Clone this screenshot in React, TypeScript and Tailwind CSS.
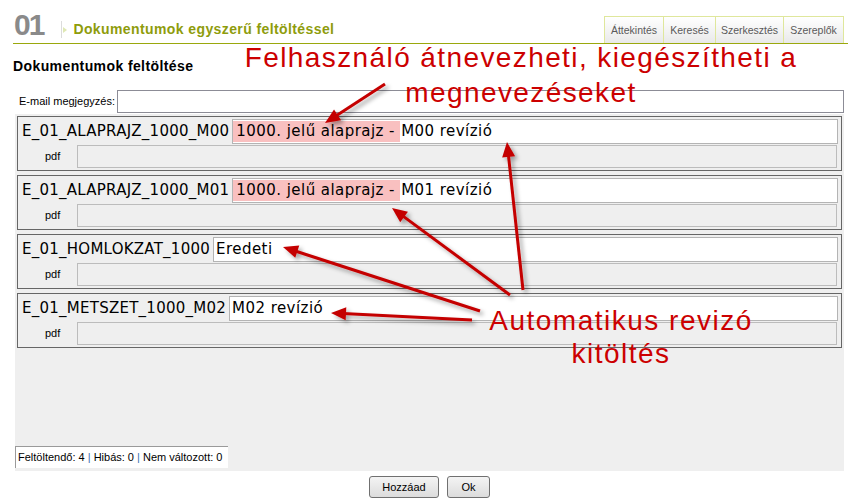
import React from "react"

interface Item {
  name: string
  prefix?: string
  value: string
}

const items: Item[] = [
  { name: "E_01_ALAPRAJZ_1000_M00", prefix: "1000. jelű alaprajz - ", value: "M00 revízió" },
  { name: "E_01_ALAPRAJZ_1000_M01", prefix: "1000. jelű alaprajz - ", value: "M01 revízió" },
  { name: "E_01_HOMLOKZAT_1000", value: "Eredeti" },
  { name: "E_01_METSZET_1000_M02", value: "M02 revízió" },
]

const tabs = [
  { label: "Áttekintés", w: "w-[60px]" },
  { label: "Keresés", w: "w-[53px]" },
  { label: "Szerkesztés", w: "w-[69px]" },
  { label: "Szereplők", w: "w-[61px]" },
]

// annotation arrows: tail -> tip
const arrows = [
  [385, 84, 325, 123],
  [523, 290, 507, 142],
  [510, 295, 392, 208],
  [480, 311, 283, 247],
  [472, 320, 331, 313],
]

function Arrow({ x1, y1, x2, y2 }: { x1: number; y1: number; x2: number; y2: number }) {
  const dx = x2 - x1
  const dy = y2 - y1
  const len = Math.hypot(dx, dy)
  const ux = dx / len
  const uy = dy / len
  const head = 15
  const half = 6.5
  const bx = x2 - ux * head
  const by = y2 - uy * head
  const px = -uy * half
  const py = ux * half
  return (
    <g>
      <line x1={x1} y1={y1} x2={bx + ux * 3} y2={by + uy * 3} stroke="#c40000" strokeWidth={3} />
      <polygon points={`${x2},${y2} ${bx + px},${by + py} ${bx - px},${by - py}`} fill="#c40000" />
    </g>
  )
}

function DocBox({ item }: { item: Item }) {
  return (
    <div className="h-[55px] border border-[#666] flex flex-col pl-[4px] pr-[3px] pt-[2px]">
      <div className="flex items-center h-[25px]">
        <span className="font-['DejaVu_Sans',Tahoma,sans-serif] text-[15px] tracking-[0.25px] text-black whitespace-nowrap">
          {item.name}
        </span>
        <div className="ml-[3px] flex-1 h-[25px] border border-[#b4b4b4] bg-white flex items-stretch font-['DejaVu_Sans',Tahoma,sans-serif] text-[15px] tracking-[0.45px] text-black">
          {item.prefix && (
            <span className="bg-[#f9c0c0] my-[1px] pl-[3px] flex items-center whitespace-pre">{item.prefix}</span>
          )}
          <span className={`flex items-center whitespace-nowrap ${item.prefix ? "pl-[1px]" : "pl-[2px]"}`}>
            {item.value}
          </span>
        </div>
      </div>
      <div className="flex items-center mt-[1px] pl-[23px]">
        <span className="w-[32px] text-[11px] text-black">pdf</span>
        <div className="flex-1 h-[23px] border border-[#bcbcbc] bg-[#efefef] mr-[1px]" />
      </div>
    </div>
  )
}

export default function App() {
  return (
    <div className="relative w-[848px] h-[501px] overflow-hidden bg-white font-['Liberation_Sans',Arial,sans-serif]">
      {/* header */}
      <div className="ml-[13px] h-[44px] flex items-start justify-between border-b border-[#9aa80c]">
        <div className="flex items-start">
          <span className="mt-[10px] ml-[1px] text-[30px] leading-[30px] font-bold tracking-[-2px] text-[#8a8a8a]">01</span>
          <span className="mt-[21px] ml-[18px] w-px h-[17px] bg-[#dcdcdc]" />
          <span className="mt-[27px] ml-[1px] w-0 h-0 border-y-[3px] border-y-transparent border-l-[4px] border-l-[#dfe8b4]" />
          <span className="mt-[21px] ml-[6px] text-[14px] leading-[16px] font-bold tracking-[0.4px] text-[#8e9c0c]">
            Dokumentumok egyszerű feltöltéssel
          </span>
        </div>
        <div className="flex self-end mr-[4px]">
          {tabs.map((t, i) => (
            <div
              key={t.label}
              className={`${t.w} ${i > 0 ? "-ml-px" : ""} h-[27px] pt-[2px] border border-b-0 border-[#dfe79c] bg-gradient-to-b from-white to-[#e9e9e9] flex items-center justify-center text-[10.5px] text-[#5a5a5a]`}
            >
              {t.label}
            </div>
          ))}
        </div>
      </div>

      <h2 className="ml-[13px] mt-[14px] text-[14px] leading-[16px] font-bold tracking-[0.4px] text-black">
        Dokumentumok feltöltése
      </h2>

      {/* e-mail row */}
      <div className="mt-[16px] ml-[19px] mr-[4px] flex items-center">
        <span className="w-[98px] text-[11px] text-black whitespace-nowrap">E-mail megjegyzés:</span>
        <div className="flex-1 h-[23px] border border-[#8c8c96] bg-white" />
      </div>

      {/* document list */}
      <div className="mt-[1px] ml-[15px] mr-[4px] h-[357px] bg-[#efefef] flex flex-col">
        <div className="flex flex-col gap-[4px] px-[2px] pt-[2px]">
          {items.map((it) => (
            <DocBox key={it.name} item={it} />
          ))}
        </div>
        <div className="flex-1" />
        <div className="mb-[3px] w-[213px] h-[22px] bg-white border-l border-t border-[#9a9a9a] pl-[2px] flex items-center text-[11px] text-black whitespace-pre">
          Feltöltendő: 4 <span className="text-[#3c6fb0]">|</span> Hibás: 0 <span className="text-[#3c6fb0]">|</span> Nem változott: 0
        </div>
      </div>

      {/* buttons */}
      <div className="ml-[15px] mr-[4px] mt-[5px] flex justify-center gap-[8px]">
        <button className="w-[70px] h-[22px] rounded-[3px] border border-[#707070] bg-gradient-to-b from-[#f4f4f4] to-[#dcdcdc] text-[11px] text-black">
          Hozzáad
        </button>
        <button className="w-[43px] h-[22px] rounded-[3px] border border-[#707070] bg-gradient-to-b from-[#f4f4f4] to-[#dcdcdc] text-[11px] text-black">
          Ok
        </button>
      </div>

      {/* annotations */}
      <div className="absolute left-[220px] top-[40px] w-[602px] text-center text-[28px] leading-[35px] tracking-[1.4px] text-[#cc0000] pointer-events-none">
        Felhasználó átnevezheti, kiegészítheti a
        <br />
        megnevezéseket
      </div>
      <div className="absolute left-[470px] top-[304px] w-[302px] text-center text-[28px] leading-[33px] tracking-[1.5px] text-[#cc0000] pointer-events-none">
        Automatikus revizó
        <br />
        kitöltés
      </div>
      <svg className="absolute left-0 top-0 pointer-events-none" width={848} height={501}>
        <defs>
          <filter id="sh" x="-20%" y="-20%" width="140%" height="140%">
            <feDropShadow dx="3" dy="3" stdDeviation="2" floodColor="#000" floodOpacity="0.35" />
          </filter>
        </defs>
        <g filter="url(#sh)">
          {arrows.map(([x1, y1, x2, y2], i) => (
            <Arrow key={i} x1={x1} y1={y1} x2={x2} y2={y2} />
          ))}
        </g>
      </svg>
    </div>
  )
}
